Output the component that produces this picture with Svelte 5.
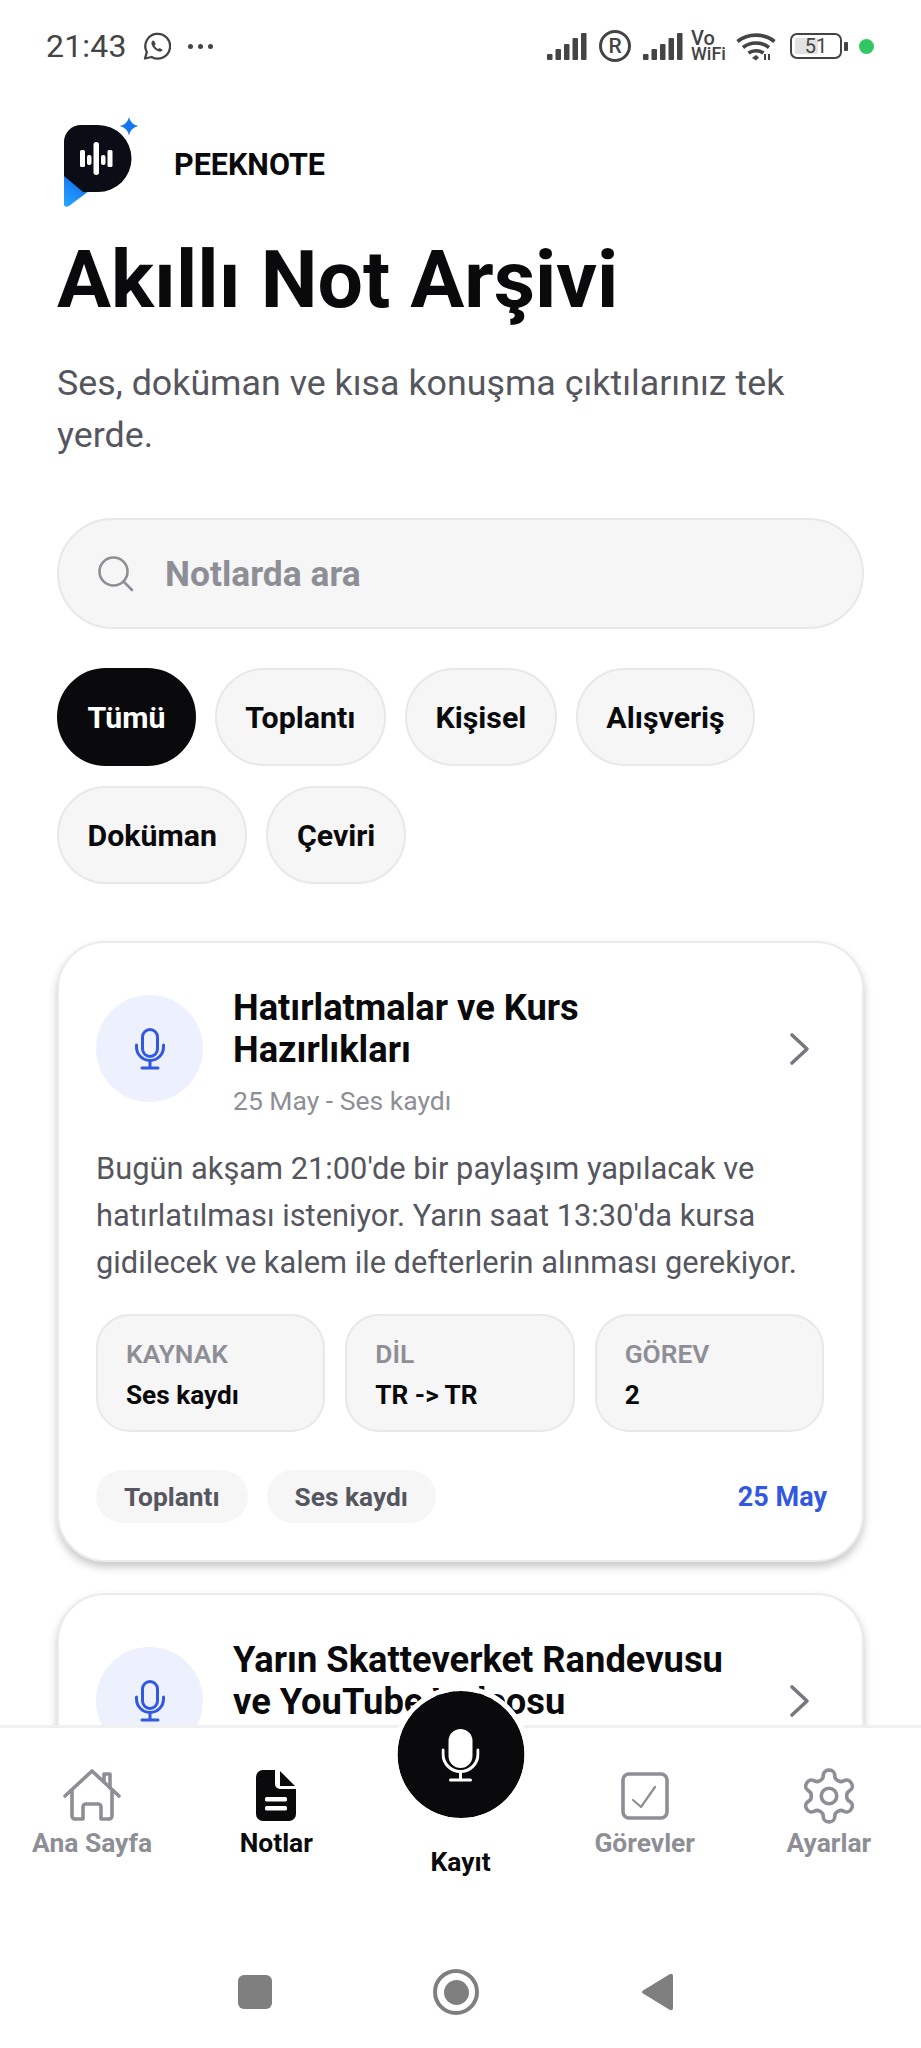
<script>
  const chips = ['Tümü', 'Toplantı', 'Kişisel', 'Alışveriş', 'Doküman', 'Çeviri'];
  const stats = [
    { label: 'KAYNAK', value: 'Ses kaydı' },
    { label: 'DİL', value: 'TR -> TR' },
    { label: 'GÖREV', value: '2' }
  ];
  const gearPath = 'M12.22 2h-.44a2 2 0 0 0-2 2v.18a2 2 0 0 1-1 1.73l-.43.25a2 2 0 0 1-2 0l-.15-.08a2 2 0 0 0-2.73.73l-.22.38a2 2 0 0 0 .73 2.73l.15.1a2 2 0 0 1 1 1.72v.51a2 2 0 0 1-1 1.74l-.15.09a2 2 0 0 0-.73 2.73l.22.38a2 2 0 0 0 2.73.73l.15-.08a2 2 0 0 1 2 0l.43.25a2 2 0 0 1 1 1.73V20a2 2 0 0 0 2 2h.44a2 2 0 0 0 2-2v-.18a2 2 0 0 1 1-1.73l.43-.25a2 2 0 0 1 2 0l.15.08a2 2 0 0 0 2.73-.73l.22-.39a2 2 0 0 0-.73-2.73l-.15-.08a2 2 0 0 1-1-1.74v-.5a2 2 0 0 1 1-1.74l.15-.09a2 2 0 0 0 .73-2.73l-.22-.38a2 2 0 0 0-2.73-.73l-.15.08a2 2 0 0 1-2 0l-.43-.25a2 2 0 0 1-1-1.73V4a2 2 0 0 0-2-2z';
</script>

{#snippet blueMic()}
  <svg class="blue-mic" viewBox="0 0 30 42" fill="none" stroke="#3358e0" stroke-width="3" stroke-linecap="round">
    <rect x="7.5" y="1.5" width="15" height="27" rx="7.5" />
    <path d="M1.5 17v2a13.5 13.5 0 0 0 27 0v-2" />
    <path d="M15 33v7M7 40h16" />
  </svg>
{/snippet}

{#snippet chevron()}
  <svg class="chevron" viewBox="0 0 24 36" fill="none" stroke="#77787f" stroke-width="3.6" stroke-linecap="round" stroke-linejoin="round">
    <path d="M4 4l15 14L4 32" />
  </svg>
{/snippet}

{#snippet bars()}
  <svg class="bars" viewBox="0 0 40 27" fill="#444">
    <rect x="0" y="21" width="5.5" height="6" rx="1" />
    <rect x="8.5" y="16" width="5.5" height="11" rx="1" />
    <rect x="17" y="11" width="5.5" height="16" rx="1" />
    <rect x="25.5" y="5" width="5.5" height="22" rx="1" />
    <rect x="34" y="0" width="5.5" height="27" rx="1" />
  </svg>
{/snippet}

<div class="phone">
  <main class="content">
    <header class="status">
      <div class="status-left">
        <span class="time">21:43</span>
        <svg class="wa" viewBox="0 0 28 28" fill="none" stroke="#444" stroke-width="2.3">
          <path d="M2 26.5l1.8-6.4A12.4 12.4 0 1 1 8.6 25z" stroke-linejoin="round" />
          <path d="M10 8.4c-1.6 1-2 2.6-1.2 4.6 1.2 2.8 3.4 5 6.2 6.2 2 .8 3.8.3 4.7-1.3l-3-2-1.4 1.2c-1.6-.8-2.9-2.1-3.700-3.700l1.200-1.400-1.800-3.200z" fill="#444" stroke="none" />
        </svg>
        <span class="dots"><i></i><i></i><i></i></span>
      </div>
      <div class="status-right">
        {@render bars()}
        <span class="reg">R</span>
        {@render bars()}
        <span class="vowifi"><span class="vo">Vo</span><span class="wf">WiFi</span></span>
        <svg class="wifi" viewBox="0 0 40 29" fill="none" stroke="#444" stroke-width="3.600">
          <path d="M1.500 9.500C12 1 28 1 38.500 9.500" />
          <path d="M7 15.500c7.500-6 18.500-6 26 0" />
          <path d="M12.500 21c4.200-3 10.800-3 15 0" />
          <path d="M16 26l4-3 3 2.500-3 3z" fill="#444" stroke="none" />
          <path d="M29 22v6M33 28v-6" stroke-width="2" />
        </svg>
        <span class="battery"><span class="fill"></span><span class="level">51</span></span>
        <span class="nub"></span>
        <span class="green"></span>
      </div>
    </header>

    <div class="brand">
      <svg class="logo" viewBox="0 0 84 92">
        <defs>
          <linearGradient id="tail" x1="0.8" y1="0" x2="0.2" y2="1">
            <stop offset="0" stop-color="#0a5fe8" />
            <stop offset="1" stop-color="#26a2ff" />
          </linearGradient>
        </defs>
        <path d="M7 56v33q1 3 5 1l24-18z" fill="url(#tail)" />
        <path d="M24 9h17a33.500 33.500 0 0 1 0 67H29L26 76 7 60V26A17 17 0 0 1 24 9z" fill="#0b0d16" />
        <g fill="#fff">
          <rect x="23" y="34" width="5" height="17" rx="1.500" />
          <rect x="30" y="39" width="4.500" height="10" rx="2" />
          <rect x="36.500" y="26" width="5.500" height="33" rx="2.700" />
          <rect x="44" y="39" width="4.500" height="10" rx="2" />
          <rect x="50.500" y="34" width="5" height="17" rx="1.500" />
        </g>
        <path d="M72 1q1.500 7.500 9.500 9q-8 1.500-9.500 9.500q-1.500-8-9.500-9.500q8-1.500 9.500-9z" fill="#1577f0" />
      </svg>
      <span class="brand-name">PEEKNOTE</span>
    </div>

    <h1>Akıllı Not Arşivi</h1>
    <p class="sub">Ses, doküman ve kısa konuşma çıktılarınız tek yerde.</p>

    <div class="search">
      <svg class="search-icon" viewBox="0 0 36 36" fill="none" stroke="#8e8f96" stroke-width="2.600" stroke-linecap="round">
        <circle cx="15.500" cy="15.500" r="14" />
        <path d="M25.500 25.500L34 34" />
      </svg>
      <span>Notlarda ara</span>
    </div>

    <div class="chips">
      {#each chips as chip, i}
        <span class="chip" class:active={i === 0}>{chip}</span>
      {/each}
    </div>

    <article class="card">
      <div class="card-head">
        <span class="circle">{@render blueMic()}</span>
        <div class="head-text">
          <h2>Hatırlatmalar ve Kurs Hazırlıkları</h2>
          <div class="meta">25 May - Ses kaydı</div>
        </div>
        {@render chevron()}
      </div>
      <p class="desc">Bugün akşam 21:00'de bir paylaşım yapılacak ve hatırlatılması isteniyor. Yarın saat 13:30'da kursa gidilecek ve kalem ile defterlerin alınması gerekiyor.</p>
      <div class="stats">
        {#each stats as s}
          <div class="stat">
            <div class="stat-label">{s.label}</div>
            <div class="stat-value">{s.value}</div>
          </div>
        {/each}
      </div>
      <div class="foot">
        <span class="tag">Toplantı</span>
        <span class="tag">Ses kaydı</span>
        <span class="date">25 May</span>
      </div>
    </article>

    <article class="card second">
      <div class="card-head">
        <span class="circle">{@render blueMic()}</span>
        <div class="head-text">
          <h2>Yarın Skatteverket Randevusu ve YouTube Videosu</h2>
          <div class="meta">25 May - Ses kaydı</div>
        </div>
        {@render chevron()}
      </div>
    </article>
  </main>

  <nav class="tabbar">
    <div class="tab">
      <svg class="tab-icon home" viewBox="0 0 60 56" fill="none" stroke="#8e8f96" stroke-width="3.600" stroke-linecap="round" stroke-linejoin="round">
        <path d="M3 28L30 3l27 25" />
        <path d="M10 23v25a3 3 0 0 0 3 3h8V39a3 3 0 0 1 3-3h12a3 3 0 0 1 3 3v12h8a3 3 0 0 0 3-3V23" />
        <path d="M42 13V6h6v14" />
      </svg>
      <span class="tab-label">Ana Sayfa</span>
    </div>
    <div class="tab current">
      <svg class="tab-icon notes" viewBox="0 0 40 51">
        <path d="M7 0h12v14a5 5 0 0 0 5 5h16v25a7 7 0 0 1-7 7H7a7 7 0 0 1-7-7V7a7 7 0 0 1 7-7z" fill="#0a0a0c" />
        <path d="M24 1l15 15H24z" fill="#0a0a0c" />
        <rect x="9" y="27" width="22" height="4.500" rx="1.500" fill="#fff" />
        <rect x="9" y="36" width="22" height="4.500" rx="1.500" fill="#fff" />
      </svg>
      <span class="tab-label">Notlar</span>
    </div>
    <div class="tab record">
      <span class="fab">
        <svg class="white-mic" viewBox="0 0 38 54" fill="none" stroke="#fff" stroke-width="3" stroke-linecap="round">
          <rect x="7" y="1" width="24" height="39" rx="12" fill="#fff" stroke="none" />
          <path d="M1.500 22v4a17.500 17.500 0 0 0 35 0v-4" />
          <path d="M19 44v8M9 52h20" />
        </svg>
      </span>
      <span class="tab-label">Kayıt</span>
    </div>
    <div class="tab">
      <svg class="tab-icon task" viewBox="0 0 48 48" fill="none" stroke="#8e8f96" stroke-linecap="round" stroke-linejoin="round">
        <rect x="2" y="2" width="44" height="44" rx="6" stroke-width="3.600" />
        <path d="M12 28l8 7 14-20" stroke-width="2.200" />
      </svg>
      <span class="tab-label">Görevler</span>
    </div>
    <div class="tab">
      <svg class="tab-icon gear" viewBox="0 0 24 24" fill="none" stroke="#8e8f96" stroke-width="1.400" stroke-linejoin="round">
        <path d={gearPath} />
        <circle cx="12" cy="12" r="3" />
      </svg>
      <span class="tab-label">Ayarlar</span>
    </div>
  </nav>

  <footer class="sysnav">
    <span class="sys-square"></span>
    <span class="sys-home"><span></span></span>
    <svg class="sys-back" viewBox="0 0 32 38">
      <path d="M29 1q3-1 3 2v32q0 3-3 2L2 20.500q-2-1.500 0-3z" fill="#7f7f7f" />
    </svg>
  </footer>
</div>

<style>
  :global(body) {
    margin: 0;
    background: #fff;
  }
  .phone {
    width: 921px;
    height: 2048px;
    display: flex;
    flex-direction: column;
    overflow: hidden;
    background: #fff;
    font-family: Roboto, "Liberation Sans", sans-serif;
    color: #0a0a0c;
  }
  .content {
    flex: 1;
    min-height: 0;
    overflow: hidden;
    padding: 0 57px;
    display: flex;
    flex-direction: column;
  }
  .status {
    height: 92px;
    flex: none;
    margin: 0 -10px 0 -11px;
    display: flex;
    align-items: center;
    justify-content: space-between;
    color: #444;
  }
  .status-left { display: flex; align-items: center; }
  .time { font-size: 32px; letter-spacing: .2px; }
  .wa { width: 28px; height: 28px; margin-left: 16px; }
  .dots { display: flex; gap: 5px; margin-left: 17px; }
  .dots i { width: 5px; height: 5px; border-radius: 50%; background: #444; }
  .status-right { display: flex; align-items: center; }
  .bars { width: 40px; height: 27px; }
  .reg {
    width: 32px;
    height: 32px;
    box-sizing: border-box;
    border: 3px solid #444;
    border-radius: 50%;
    margin: 0 12px;
    font-size: 21px;
    line-height: 26px;
    font-weight: 500;
    display: flex;
    align-items: center;
    justify-content: center;
  }
  .vowifi {
    display: flex;
    flex-direction: column;
    margin-left: 8px;
    width: 37px;
    font-weight: 500;
  }
  .vo { font-size: 20px; line-height: 16px; height: 16px; }
  .wf { font-size: 18px; line-height: 16px; height: 16px; }
  .wifi { width: 40px; height: 29px; margin-left: 8px; }
  .battery {
    position: relative;
    width: 52px;
    height: 26px;
    box-sizing: border-box;
    border: 2.500px solid #444;
    border-radius: 7px;
    margin-left: 14px;
    display: flex;
    align-items: center;
    justify-content: center;
    overflow: hidden;
  }
  .fill {
    position: absolute;
    left: 3px;
    top: 3px;
    bottom: 3px;
    width: 23px;
    background: #e2e2e2;
    border-radius: 2px;
  }
  .level { position: relative; font-size: 20px; }
  .nub {
    width: 4px;
    height: 9px;
    background: #444;
    border-radius: 1px;
    margin-left: 2px;
  }
  .green {
    width: 15px;
    height: 15px;
    border-radius: 50%;
    background: #31c763;
    margin-left: 11px;
  }
  .brand {
    margin-top: 24px;
    display: flex;
    align-items: center;
    gap: 33px;
    flex: none;
  }
  .logo { width: 84px; height: 92px; }
  .brand-name { font-size: 30.500px; font-weight: 700; margin-top: 4px; }
  h1 {
    margin: 28px 0 0;
    font-size: 80.500px;
    line-height: 88px;
    font-weight: 700;
    flex: none;
  }
  .sub {
    margin: 33px 0 0;
    font-size: 35.800px;
    line-height: 52px;
    color: #55565e;
    flex: none;
  }
  .search {
    margin-top: 57px;
    height: 111px;
    flex: none;
    box-sizing: border-box;
    border: 2.500px solid #e8e8ea;
    border-radius: 56px;
    background: #f6f6f7;
    display: flex;
    align-items: center;
    padding-left: 39px;
    gap: 31px;
    font-size: 35.400px;
    font-weight: 700;
    color: #8e8f96;
  }
  .search-icon { width: 36px; height: 36px; }
  .chips {
    margin-top: 39px;
    display: flex;
    flex-wrap: wrap;
    gap: 20px 19px;
    flex: none;
  }
  .chip {
    height: 98px;
    box-sizing: border-box;
    padding: 0 28.500px;
    display: flex;
    align-items: center;
    border: 2.500px solid #e8e8ea;
    border-radius: 49px;
    background: #f6f6f7;
    font-size: 30.300px;
    font-weight: 700;
  }
  .chip.active {
    background: #0a0a0c;
    border-color: #0a0a0c;
    color: #fff;
  }
  .card {
    margin-top: 57px;
    flex: none;
    box-sizing: border-box;
    height: 621px;
    padding: 0 37px;
    background: #fff;
    border: 2px solid #ebebeb;
    border-radius: 48px;
    box-shadow: 0 5px 9px rgba(0, 0, 0, .22);
  }
  .card.second {
    margin-top: 31px;
  }
  .card-head {
    display: flex;
    align-items: center;
    gap: 30px;
    padding-top: 44px;
  }
  .circle {
    width: 107px;
    height: 107px;
    flex: none;
    margin-top: -8px;
    border-radius: 50%;
    background: #edf1fd;
    display: flex;
    align-items: center;
    justify-content: center;
  }
  .blue-mic { width: 30px; height: 42px; }
  .head-text { flex: 1; min-width: 0; }
  h2 {
    margin: 0;
    font-size: 36.300px;
    line-height: 42px;
    font-weight: 700;
    max-width: 500px;
  }
  .meta {
    margin-top: 13px;
    font-size: 26.500px;
    line-height: 34px;
    color: #8e8f96;
  }
  .chevron { width: 24px; height: 36px; flex: none; margin: -8px 13px 0 0; }
  .desc {
    margin: 27px 0 0;
    font-size: 30.800px;
    line-height: 47px;
    color: #55565e;
  }
  .stats {
    margin-top: 28px;
    display: grid;
    grid-template-columns: repeat(3, 1fr);
    gap: 20px;
    width: 728px;
  }
  .stat {
    height: 118px;
    box-sizing: border-box;
    padding: 23px 28px 0;
    background: #f6f6f7;
    border: 2.500px solid #e8e8ea;
    border-radius: 34px;
  }
  .stat-label {
    font-size: 26.300px;
    line-height: 30px;
    font-weight: 600;
    color: #8e8f96;
  }
  .stat-value {
    margin-top: 11px;
    font-size: 26.200px;
    line-height: 30px;
    font-weight: 700;
  }
  .foot {
    margin-top: 38px;
    display: flex;
    align-items: center;
    gap: 19px;
  }
  .tag {
    height: 53px;
    padding: 0 28px;
    display: flex;
    align-items: center;
    border-radius: 27px;
    background: #f6f6f7;
    font-size: 26.300px;
    font-weight: 700;
    color: #55565e;
  }
  .date {
    margin-left: auto;
    margin-right: -2px;
    font-size: 27px;
    font-weight: 700;
    color: #3358e0;
  }
  .tabbar {
    position: relative;
    height: 211px;
    flex: none;
    box-sizing: border-box;
    border-top: 3px solid #f0f0f0;
    background: #fff;
    display: flex;
    z-index: 1;
  }
  .tab {
    flex: 1;
    display: flex;
    flex-direction: column;
    align-items: center;
    position: relative;
    padding-top: 40px;
  }
  .tab-icon { height: 56px; flex: none; }
  .home { width: 60px; }
  .notes { width: 40px; height: 51px; margin: 2px 0 3px; }
  .task { width: 48px; height: 48px; margin: 4px 0; }
  .gear { width: 62px; height: 62px; margin: -3px 0; }
  .tab-label {
    margin-top: 4px;
    font-size: 26.400px;
    line-height: 30px;
    font-weight: 700;
    color: #8e8f96;
  }
  .current .tab-label, .record .tab-label { color: #0a0a0c; }
  .record { padding-top: 119px; }
  .record .tab-label { margin-top: 0; }
  .fab {
    position: absolute;
    top: -42px;
    left: 50%;
    transform: translateX(-50%);
    width: 137px;
    height: 137px;
    box-sizing: border-box;
    border: 5px solid #fff;
    border-radius: 50%;
    background: #0a0a0c;
    background-clip: padding-box;
    display: flex;
    align-items: center;
    justify-content: center;
  }
  .white-mic { width: 38px; height: 54px; }
  .sysnav {
    height: 112px;
    flex: none;
    background: #fff;
    position: relative;
    z-index: 1;
    display: flex;
    align-items: center;
    padding-left: 238px;
  }
  .sys-square {
    width: 34px;
    height: 34px;
    background: #7f7f7f;
    border-radius: 6px;
  }
  .sys-home {
    margin-left: 161px;
    width: 46px;
    height: 46px;
    box-sizing: border-box;
    border: 4px solid #7f7f7f;
    border-radius: 50%;
    display: flex;
    align-items: center;
    justify-content: center;
  }
  .sys-home span {
    width: 25px;
    height: 25px;
    border-radius: 50%;
    background: #7f7f7f;
  }
  .sys-back { width: 32px; height: 38px; margin-left: 162px; }
</style>
